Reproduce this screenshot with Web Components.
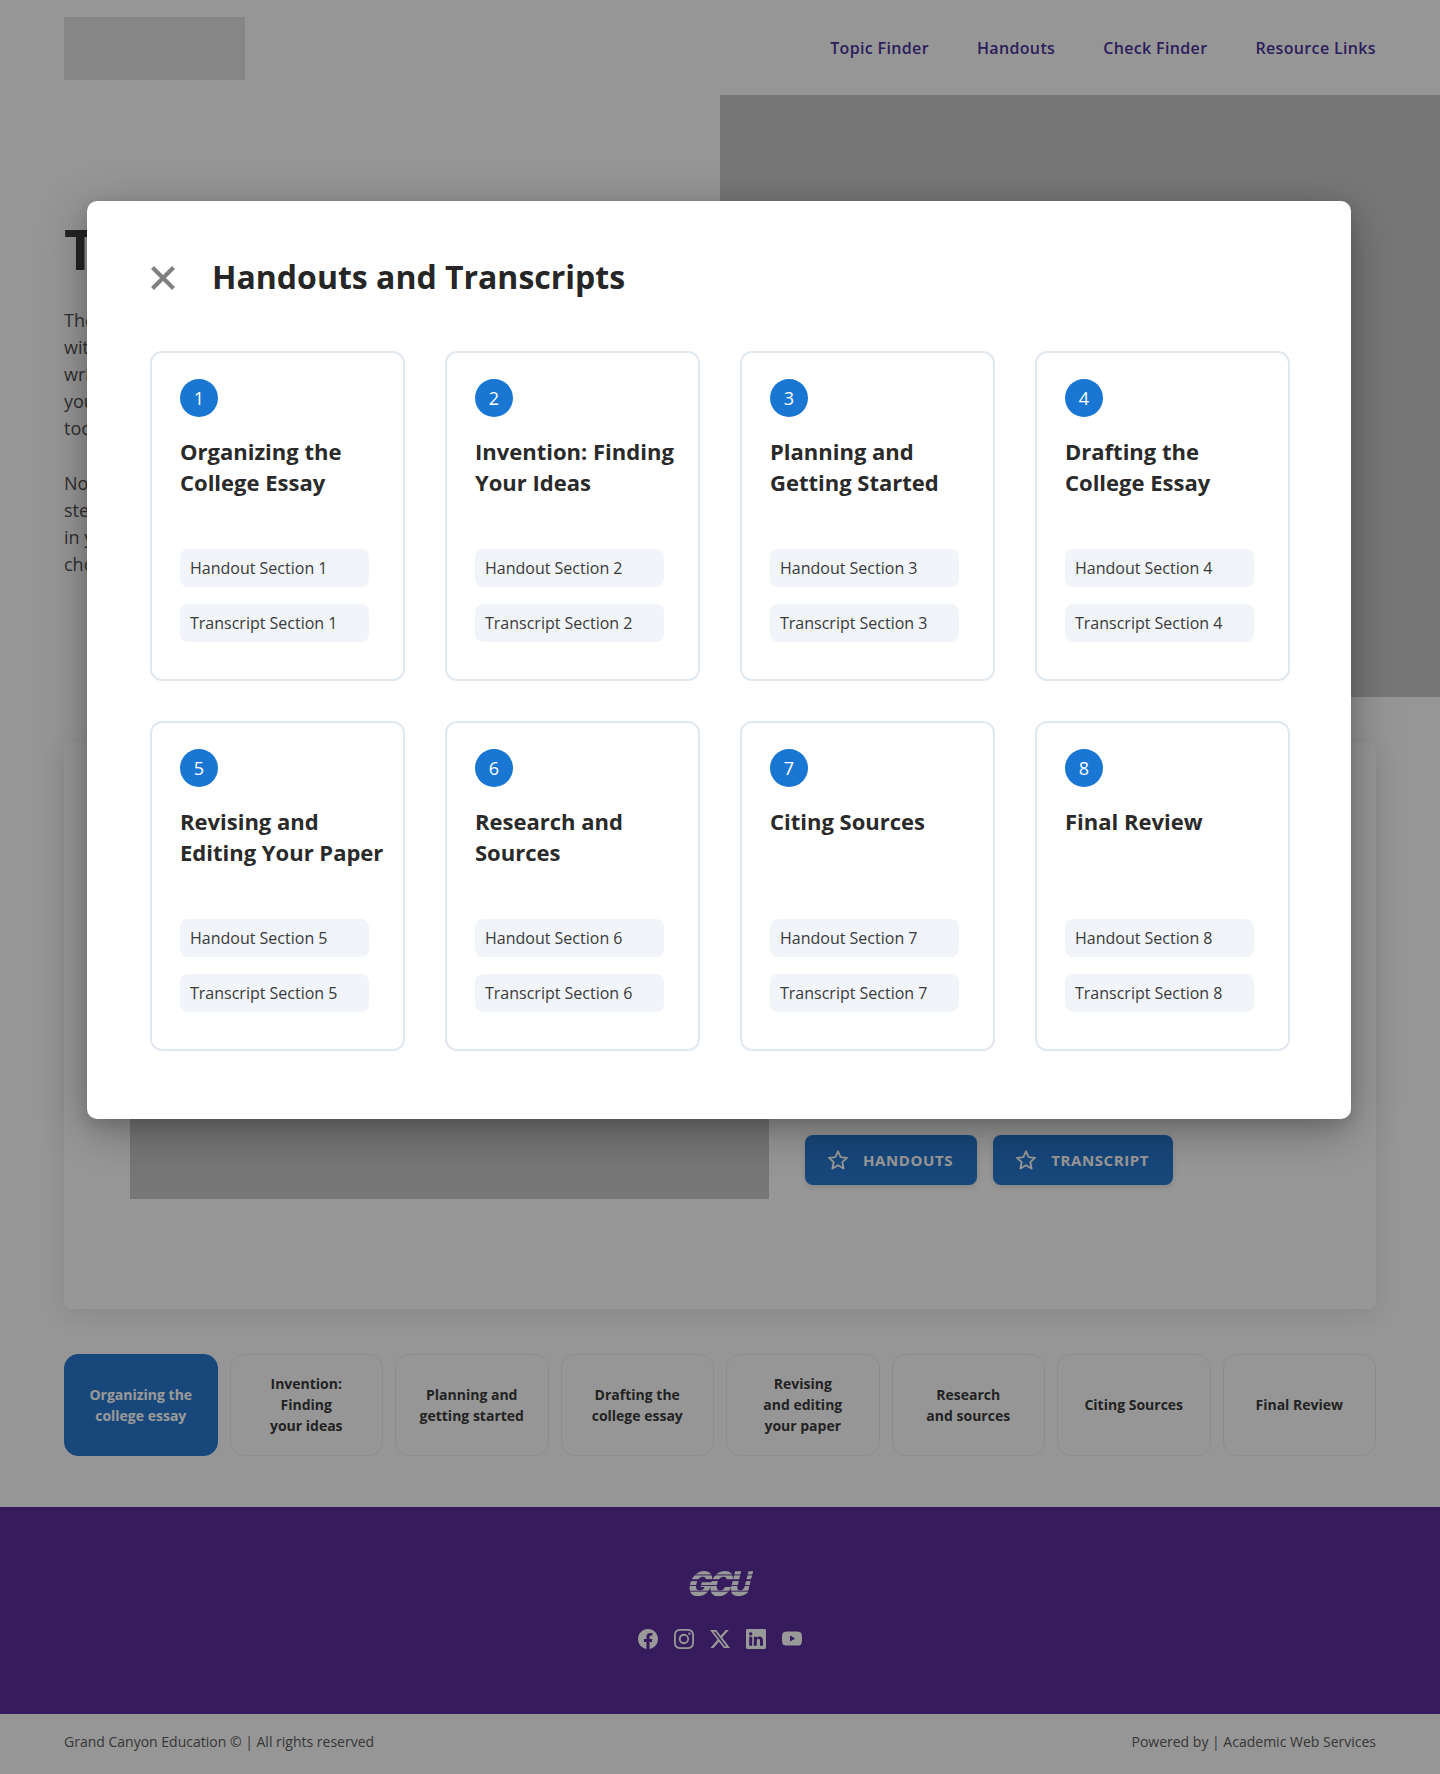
<!DOCTYPE html>
<html lang="en">
<head>
<meta charset="utf-8">
<title>Handouts and Transcripts</title>
<style>
  html, body { margin: 0; padding: 0; }
  body {
    position: relative;
    width: 1440px;
    height: 1774px;
    overflow: hidden;
    background: #fbfbfb;
    font-family: "Open Sans", "Liberation Sans", sans-serif;
    color: #333;
  }
  .tabs-row {
    display: flex;
    gap: 12px;
    margin: 45px 64px 0 64px;
  }
</style>
</head>
<body>
  <site-header></site-header>
  <hero-section></hero-section>
  <lesson-panel></lesson-panel>
  <div class="tabs-row">
    <topic-tab active>Organizing the<br>college essay</topic-tab>
    <topic-tab>Invention:<br>Finding<br>your ideas</topic-tab>
    <topic-tab>Planning and<br>getting started</topic-tab>
    <topic-tab>Drafting the<br>college essay</topic-tab>
    <topic-tab>Revising<br>and editing<br>your paper</topic-tab>
    <topic-tab>Research<br>and sources</topic-tab>
    <topic-tab>Citing Sources</topic-tab>
    <topic-tab>Final Review</topic-tab>
  </div>
  <site-footer></site-footer>

  <handouts-modal>
    <handout-card num="1">Organizing the<br>College Essay</handout-card>
    <handout-card num="2">Invention: Finding<br>Your Ideas</handout-card>
    <handout-card num="3">Planning and<br>Getting Started</handout-card>
    <handout-card num="4">Drafting the<br>College Essay</handout-card>
    <handout-card num="5">Revising and<br>Editing Your Paper</handout-card>
    <handout-card num="6">Research and<br>Sources</handout-card>
    <handout-card num="7">Citing Sources</handout-card>
    <handout-card num="8">Final Review</handout-card>
  </handouts-modal>

<script>
const headerTemplate = document.createElement('template');
headerTemplate.innerHTML = `
  <style>
    :host { display: block; }
    .bar {
      height: 95px;
      box-sizing: border-box;
      padding: 17px 64px 0;
      display: flex;
      justify-content: space-between;
      align-items: flex-start;
    }
    .logo { width: 181px; height: 63px; background: #e0e0e0; }
    nav { display: flex; gap: 48px; padding-top: 20px; }
    a {
      font-size: 16px;
      line-height: 22px;
      font-weight: 600;
      color: #4a3296;
      text-decoration: none;
      letter-spacing: .35px;
    }
  </style>
  <div class="bar">
    <div class="logo"></div>
    <nav>
      <a href="#">Topic Finder</a>
      <a href="#">Handouts</a>
      <a href="#">Check Finder</a>
      <a href="#">Resource Links</a>
    </nav>
  </div>
`;

class SiteHeader extends HTMLElement {
  connectedCallback() {
    const shadowRoot = this.attachShadow({ mode: 'open' });
    shadowRoot.appendChild(headerTemplate.content.cloneNode(true));
  }
}
customElements.define('site-header', SiteHeader);

const heroTemplate = document.createElement('template');
heroTemplate.innerHTML = `
  <style>
    :host { display: block; }
    .hero { display: grid; grid-template-columns: 720px 720px; height: 602px; }
    .copy { padding: 120px 0 0 64px; }
    h1 {
      margin: 0 0 25px;
      font-size: 56px;
      line-height: 67px;
      font-weight: 700;
      color: #3c3c3c;
    }
    p {
      margin: 0 0 28px;
      font-size: 18px;
      line-height: 27px;
      color: #505050;
    }
    .picture { background: #c6c6c6; }
  </style>
  <div class="hero">
    <div class="copy">
      <h1>Topic</h1>
      <p>The<br>with<br>write<br>your<br>tool</p>
      <p>Now<br>steps<br>in your<br>chosen</p>
    </div>
    <div class="picture"></div>
  </div>
`;

class HeroSection extends HTMLElement {
  connectedCallback() {
    const shadowRoot = this.attachShadow({ mode: 'open' });
    shadowRoot.appendChild(heroTemplate.content.cloneNode(true));
  }
}
customElements.define('hero-section', HeroSection);

const panelTemplate = document.createElement('template');
panelTemplate.innerHTML = `
  <style>
    :host { display: block; margin: 46px 64px 0 64px; }
    .panel {
      height: 566px;
      box-sizing: border-box;
      padding: 56px 46px 110px 66px;
      display: grid;
      grid-template-columns: 639px 1fr;
      column-gap: 36px;
      background: #fcfcfc;
      border-radius: 8px;
      box-shadow: 0 6px 30px rgba(0, 0, 0, .1);
    }
    .picture { background: #c6c6c6; }
    .actions { display: flex; gap: 16px; align-items: flex-end; padding-bottom: 14px; }
    button {
      display: flex;
      align-items: center;
      gap: 14px;
      height: 50px;
      padding: 0 24px 0 22px;
      border: 0;
      border-radius: 8px;
      background: #2777ce;
      color: #fff;
      font: 700 15px "Open Sans", sans-serif;
      letter-spacing: .6px;
      box-shadow: 0 2px 6px rgba(0, 0, 0, .12);
    }
    svg { width: 22px; height: 22px; fill: none; stroke: #fff; stroke-width: 2; stroke-linejoin: round; }
  </style>
  <div class="panel">
    <div class="picture"></div>
    <div class="actions">
      <button><svg viewBox="0 0 24 24"><polygon points="12,2.5 14.9,8.9 21.8,9.7 16.7,14.4 18.1,21.3 12,17.8 5.9,21.3 7.3,14.4 2.2,9.7 9.1,8.9"/></svg>HANDOUTS</button>
      <button><svg viewBox="0 0 24 24"><polygon points="12,2.5 14.9,8.9 21.8,9.7 16.7,14.4 18.1,21.3 12,17.8 5.9,21.3 7.3,14.4 2.2,9.7 9.1,8.9"/></svg>TRANSCRIPT</button>
    </div>
  </div>
`;

class LessonPanel extends HTMLElement {
  connectedCallback() {
    const shadowRoot = this.attachShadow({ mode: 'open' });
    shadowRoot.appendChild(panelTemplate.content.cloneNode(true));
  }
}
customElements.define('lesson-panel', LessonPanel);

const tabTemplate = document.createElement('template');
tabTemplate.innerHTML = `
  <style>
    :host {
      display: flex;
      flex: 1 1 0;
      height: 102px;
      box-sizing: border-box;
      padding-bottom: 1px;
      align-items: center;
      justify-content: center;
      text-align: center;
      border: 1px solid #e9e9e9;
      border-radius: 14px;
      background: #fbfbfb;
      font-size: 14px;
      line-height: 21px;
      font-weight: 700;
      color: #3a3a3a;
    }
    :host([active]) { background: #2777ce; border-color: #2777ce; color: #fff; }
  </style>
  <slot></slot>
`;

class TopicTab extends HTMLElement {
  connectedCallback() {
    const shadowRoot = this.attachShadow({ mode: 'open' });
    shadowRoot.appendChild(tabTemplate.content.cloneNode(true));
  }
}
customElements.define('topic-tab', TopicTab);

const footerTemplate = document.createElement('template');
footerTemplate.innerHTML = `
  <style>
    :host { display: block; margin-top: 51px; }
    .brand {
      height: 207px;
      box-sizing: border-box;
      padding-top: 64px;
      background: #5b2f9c;
      display: flex;
      flex-direction: column;
      align-items: center;
    }
    .mark {
      font: 900 31px/26px "Inter", "Liberation Sans", sans-serif;
      letter-spacing: -2.5px;
      color: transparent;
      background: repeating-linear-gradient(180deg, #fff 0 4px, #5b2f9c 4px 5px);
      -webkit-background-clip: text;
      background-clip: text;
      transform: skewX(-14deg) scaleY(1.1);
    }
    .social { display: flex; gap: 16px; align-items: center; margin-top: 32px; }
    svg { width: 20px; height: 20px; fill: #fff; display: block; }
    .legal {
      height: 60px;
      box-sizing: border-box;
      padding: 0 64px 6px;
      display: flex;
      justify-content: space-between;
      align-items: center;
      font-size: 14px;
      color: #5c5c5c;
    }
  </style>
  <div class="brand">
    <div class="mark">GCU</div>
    <div class="social">
      <svg viewBox="0 0 16 16"><path d="M16 8.049c0-4.446-3.582-8.05-8-8.05C3.58 0-.002 3.603-.002 8.05c0 4.017 2.926 7.347 6.75 7.951v-5.625h-2.03V8.05H6.75V6.275c0-2.017 1.195-3.131 3.022-3.131.876 0 1.791.157 1.791.157v1.98h-1.009c-.993 0-1.303.621-1.303 1.258v1.51h2.218l-.354 2.326H9.25V16c3.824-.604 6.75-3.934 6.75-7.951"/></svg>
      <svg viewBox="0 0 16 16"><path d="M8 0C5.829 0 5.556.01 4.703.048 3.85.088 3.269.222 2.76.42a3.9 3.9 0 0 0-1.417.923A3.9 3.9 0 0 0 .42 2.76C.222 3.268.087 3.85.048 4.7.01 5.555 0 5.827 0 8.001c0 2.172.01 2.444.048 3.297.04.852.174 1.433.372 1.942.205.526.478.972.923 1.417.444.445.89.719 1.416.923.51.198 1.09.333 1.942.372C5.555 15.99 5.827 16 8 16s2.444-.01 3.298-.048c.851-.04 1.434-.174 1.943-.372a3.9 3.9 0 0 0 1.416-.923c.445-.445.718-.891.923-1.417.197-.509.332-1.09.372-1.942C15.99 10.445 16 10.173 16 8s-.01-2.445-.048-3.299c-.04-.851-.175-1.433-.372-1.941a3.9 3.9 0 0 0-.923-1.417A3.9 3.9 0 0 0 13.24.42c-.51-.198-1.092-.333-1.943-.372C10.443.01 10.172 0 7.998 0zm-.717 1.442h.718c2.136 0 2.389.007 3.232.046.78.035 1.204.166 1.486.275.373.145.64.319.92.599s.453.546.598.92c.11.281.24.705.275 1.485.039.843.047 1.096.047 3.231s-.008 2.389-.047 3.232c-.035.78-.166 1.203-.275 1.485a2.5 2.5 0 0 1-.599.919c-.28.28-.546.453-.92.598-.28.11-.704.24-1.485.276-.843.038-1.096.047-3.232.047s-2.39-.009-3.233-.047c-.78-.036-1.203-.166-1.485-.276a2.5 2.5 0 0 1-.92-.598 2.5 2.5 0 0 1-.6-.92c-.109-.281-.24-.705-.275-1.485-.038-.843-.046-1.096-.046-3.233s.008-2.388.046-3.231c.036-.78.166-1.204.276-1.486.145-.373.319-.64.599-.92s.546-.453.92-.598c.282-.11.705-.24 1.485-.276.738-.034 1.024-.044 2.515-.045zm4.988 1.328a.96.96 0 1 0 0 1.92.96.96 0 0 0 0-1.92m-4.27 1.122a4.109 4.109 0 1 0 0 8.217 4.109 4.109 0 0 0 0-8.217m0 1.441a2.667 2.667 0 1 1 0 5.334 2.667 2.667 0 0 1 0-5.334"/></svg>
      <svg viewBox="0 0 16 16"><path d="M12.6.75h2.454l-5.36 6.142L16 15.25h-4.937l-3.867-5.07-4.425 5.07H.316l5.733-6.57L0 .75h5.063l3.495 4.633L12.601.75Zm-.86 13.028h1.36L4.323 2.145H2.865z"/></svg>
      <svg viewBox="0 0 16 16"><path d="M0 1.146C0 .513.526 0 1.175 0h13.65C15.474 0 16 .513 16 1.146v13.708c0 .633-.526 1.146-1.175 1.146H1.175C.526 16 0 15.487 0 14.854zm4.943 12.248V6.169H2.542v7.225zm-1.2-8.212c.837 0 1.358-.554 1.358-1.248-.015-.709-.52-1.248-1.342-1.248S2.4 3.226 2.4 3.934c0 .694.521 1.248 1.327 1.248zm4.908 8.212V9.359c0-.216.016-.432.08-.586.173-.431.568-.878 1.232-.878.869 0 1.216.662 1.216 1.634v3.865h2.401V9.25c0-2.22-1.184-3.252-2.764-3.252-1.274 0-1.845.7-2.165 1.193v.025h-.016l.016-.025V6.169h-2.4c.03.678 0 7.225 0 7.225z"/></svg>
      <svg viewBox="0 0 16 16"><path d="M8.051 1.999h.089c.822.003 4.987.033 6.11.335a2.01 2.01 0 0 1 1.415 1.42c.101.38.172.883.22 1.402l.01.104.022.26.008.104c.065.914.073 1.77.074 1.957v.075c-.001.194-.01 1.108-.082 2.06l-.008.105-.009.104c-.05.572-.124 1.14-.235 1.558a2.01 2.01 0 0 1-1.415 1.42c-1.16.312-5.569.334-6.18.335h-.142c-.309 0-1.587-.006-2.927-.052l-.17-.006-.087-.004-.171-.007-.171-.007c-1.11-.049-2.167-.128-2.654-.26a2.01 2.01 0 0 1-1.415-1.419c-.111-.417-.185-.986-.235-1.558L.09 9.82l-.008-.104A31 31 0 0 1 0 7.68v-.123c.002-.215.01-.958.064-1.778l.007-.103.003-.052.008-.104.022-.26.01-.104c.048-.519.119-1.023.22-1.402a2.01 2.01 0 0 1 1.415-1.42c.487-.13 1.544-.21 2.654-.26l.17-.007.172-.006.086-.003.171-.007A100 100 0 0 1 7.858 2zM6.4 5.209v4.818l4.157-2.408z"/></svg>
    </div>
  </div>
  <div class="legal">
    <span>Grand Canyon Education © | All rights reserved</span>
    <span>Powered by | Academic Web Services</span>
  </div>
`;

class SiteFooter extends HTMLElement {
  connectedCallback() {
    const shadowRoot = this.attachShadow({ mode: 'open' });
    shadowRoot.appendChild(footerTemplate.content.cloneNode(true));
  }
}
customElements.define('site-footer', SiteFooter);

const modalTemplate = document.createElement('template');
modalTemplate.innerHTML = `
  <style>
    :host {
      position: absolute;
      inset: 0;
      display: block;
      background: rgba(0, 0, 0, .4);
    }
    .dialog {
      position: absolute;
      left: 87px;
      top: 201px;
      width: 1264px;
      height: 918px;
      box-sizing: border-box;
      padding: 56px 61px 0 63px;
      background: #fff;
      border-radius: 10px;
      box-shadow: 0 12px 48px rgba(0, 0, 0, .3), 0 6px 16px rgba(0, 0, 0, .12);
    }
    header { display: flex; align-items: center; height: 40px; gap: 36px; margin-bottom: 54px; }
    header svg { width: 26px; height: 26px; margin-top: 2px; fill: none; stroke: #808080; stroke-width: 4.2; display: block; }
    h2 {
      margin: 0;
      font-size: 32px;
      line-height: 40px;
      font-weight: 700;
      color: #262626;
    }
    .grid { display: grid; grid-template-columns: repeat(4, 255px); column-gap: 40px; row-gap: 40px; }
  </style>
  <div class="dialog">
    <header>
      <svg viewBox="0 0 26 26"><path d="M2.5 2.5 23.5 23.5M23.5 2.5 2.5 23.5"/></svg>
      <h2>Handouts and Transcripts</h2>
    </header>
    <div class="grid"><slot></slot></div>
  </div>
`;

class HandoutsModal extends HTMLElement {
  connectedCallback() {
    const shadowRoot = this.attachShadow({ mode: 'open' });
    shadowRoot.appendChild(modalTemplate.content.cloneNode(true));
  }
}
customElements.define('handouts-modal', HandoutsModal);

const cardTemplate = document.createElement('template');
cardTemplate.innerHTML = `
  <style>
    :host {
      display: block;
      height: 330px;
      box-sizing: border-box;
      padding: 26px 10px 0 28px;
      border: 2px solid #e2e8f0;
      border-radius: 12px;
      background: #fff;
    }
    .num {
      display: flex;
      align-items: center;
      justify-content: center;
      width: 38px;
      height: 38px;
      border-radius: 50%;
      background: #1976d2;
      color: #fff;
      font-size: 18px;
      font-weight: 500;
    }
    h3 {
      margin: 19px 0 51px;
      height: 62px;
      font-size: 22px;
      line-height: 31px;
      font-weight: 700;
      color: #2a2a2a;
    }
    a {
      display: flex;
      align-items: center;
      width: 189px;
      height: 38px;
      box-sizing: border-box;
      padding: 0 10px;
      margin-bottom: 17px;
      border-radius: 8px;
      background: #f1f4f9;
      color: #3a3a3a;
      font-size: 16px;
      text-decoration: none;
    }
  </style>
  <div class="num"></div>
  <h3><slot></slot></h3>
  <a class="handout" href="#"></a>
  <a class="transcript" href="#"></a>
`;

class HandoutCard extends HTMLElement {
  connectedCallback() {
    const shadowRoot = this.attachShadow({ mode: 'open' });
    shadowRoot.appendChild(cardTemplate.content.cloneNode(true));
    const num = this.getAttribute('num');
    shadowRoot.querySelector('.num').textContent = num;
    shadowRoot.querySelector('.handout').textContent = 'Handout Section ' + num;
    shadowRoot.querySelector('.transcript').textContent = 'Transcript Section ' + num;
  }
}
customElements.define('handout-card', HandoutCard);
</script>
</body>
</html>
